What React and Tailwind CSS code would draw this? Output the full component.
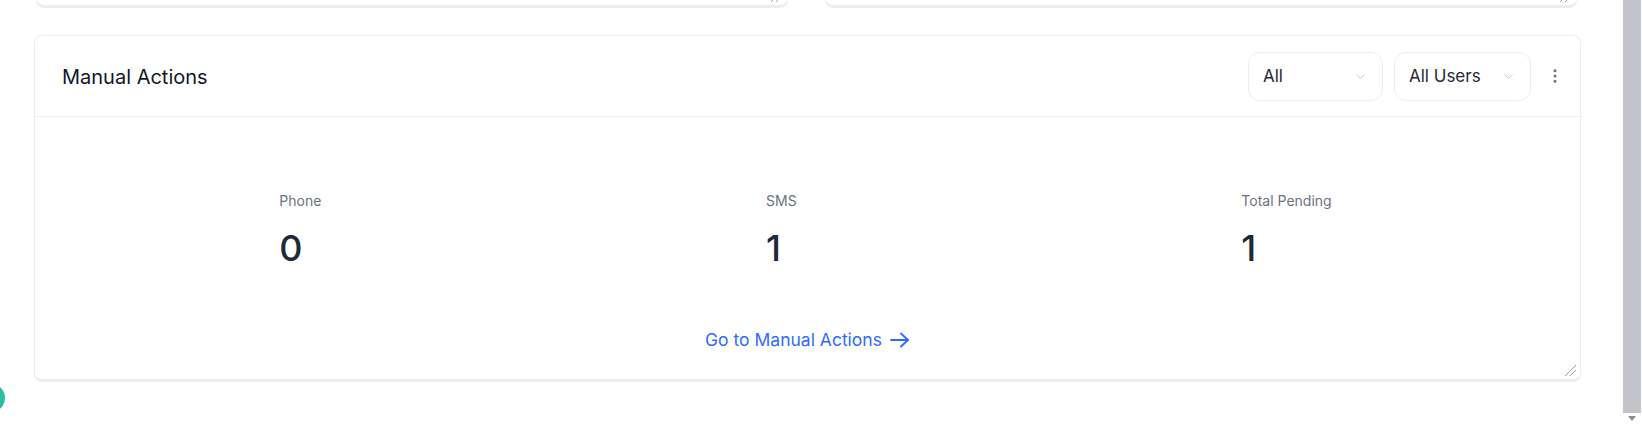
import React from "react";
import { ChevronDown, EllipsisVertical } from "lucide-react";

// small diagonal grip drawn in the bottom-right corner of resizable cards
const ResizeGrip = ({ className }) => (
  <svg width="14" height="14" viewBox="0 0 14 14" className={className}>
    <line x1="2" y1="13" x2="13" y2="2" stroke="#a1a1aa" strokeWidth="1" />
    <line x1="7" y1="13" x2="13" y2="7" stroke="#a1a1aa" strokeWidth="1" />
  </svg>
);

const Select = ({ label, width }) => (
  <div className={`${width} h-[49px] rounded-xl border border-[#ececf1] flex items-center justify-between pl-[14px] pr-[14px] bg-white`}>
    <span className="text-[17px] text-[#1f2937] pt-[2px]">{label}</span>
    <ChevronDown size={15} strokeWidth={1.25} className="text-[#b3b3bd]" />
  </div>
);

const Stat = ({ label, value }) => (
  <div className="flex flex-col">
    <span className="text-[14px] text-[#6b7280] leading-5">{label}</span>
    <span className="text-[36px] font-medium text-[#1e293b] leading-[44px] mt-[15px]">{value}</span>
  </div>
);

const App = () => {
  const stats = [
    { label: "Phone", value: "0" },
    { label: "SMS", value: "1" },
    { label: "Total Pending", value: "1" },
  ];

  return (
    <div className="h-[424px] w-full flex bg-white overflow-hidden font-['Inter',sans-serif]">
      {/* PAGE */}
      <div className="flex-1 relative overflow-hidden pl-[34px] pr-[41px]">
        {/* previous row of cards, scrolled mostly out of view */}
        <div className="flex gap-[37px] pl-[2px] pr-[4px] -mt-[40px] h-[48px]">
          <div className="flex-1 relative rounded-lg border border-[#ececf1] border-b-[3px] bg-white">
            <ResizeGrip className="absolute right-[4px] bottom-[2px]" />
          </div>
          <div className="flex-1 relative rounded-lg border border-[#ececf1] border-b-[3px] bg-white">
            <ResizeGrip className="absolute right-[4px] bottom-[2px]" />
          </div>
        </div>

        {/* MANUAL ACTIONS CARD */}
        <div className="mt-[27px] relative h-[347px] rounded-lg border border-[#ececf1] border-b-[3px] bg-white flex flex-col">
          <div className="h-[81px] shrink-0 border-b border-[#ececf1] flex items-center justify-between pl-[27px] pr-[16px]">
            <h2 className="text-[20px] text-[#111827] pt-[2px]">Manual Actions</h2>
            <div className="flex items-center gap-[11px]">
              <Select label="All" width="w-[135px]" />
              <Select label="All Users" width="w-[137px]" />
              <EllipsisVertical size={18} strokeWidth={2} className="text-[#6b7280] ml-[4px]" />
            </div>
          </div>

          <div className="flex justify-around pl-[22px] pr-[26px] pt-[74px]">
            {stats.map((s) => (
              <Stat key={s.label} label={s.label} value={s.value} />
            ))}
          </div>

          <div className="flex justify-center mt-[57px]">
            <a className="flex items-center gap-[7px] text-[17.5px] text-[#2f6bff] cursor-pointer">
              Go to Manual Actions
              <svg width="21" height="16" viewBox="0 0 21 16" fill="none" stroke="currentColor" strokeWidth="1.9" strokeLinecap="round" strokeLinejoin="round">
                <line x1="2" y1="8" x2="19" y2="8" />
                <polyline points="12,1.5 19,8 12,14.5" />
              </svg>
            </a>
          </div>

          <ResizeGrip className="absolute right-[3px] bottom-[2px]" />
        </div>

        {/* floating widget peeking in from the left edge */}
        <div className="absolute -left-[23px] top-[384px] w-[28px] h-[28px] rounded-full bg-[#2bbf9f]" />
      </div>

      {/* SCROLLBAR */}
      <div className="w-[20px] shrink-0 flex flex-col bg-white">
        <div className="h-[413px] mx-[1px] bg-[#c3c3cb]" />
        <div className="flex-1 flex items-center justify-center">
          <div className="w-0 h-0 border-l-[4px] border-r-[4px] border-t-[5px] border-l-transparent border-r-transparent border-t-[#8f8a99]" />
        </div>
      </div>
    </div>
  );
};

export default App;
